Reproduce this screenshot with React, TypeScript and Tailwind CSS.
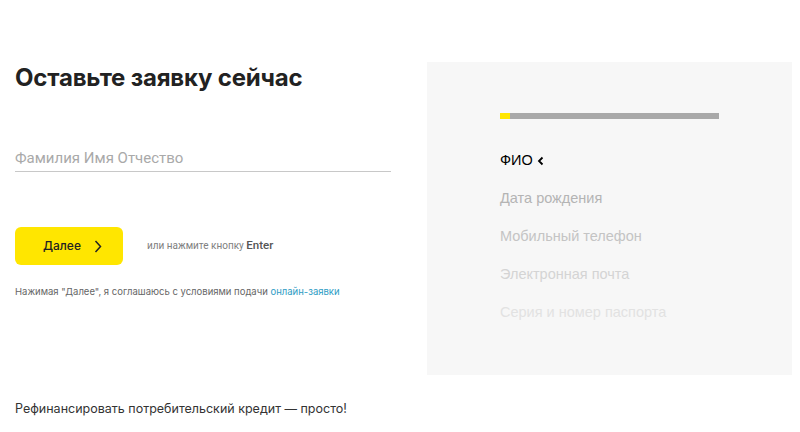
const steps = [
  { label: "Дата рождения", color: "text-[#b4b4b4]" },
  { label: "Мобильный телефон", color: "text-[#c4c4c4]" },
  { label: "Электронная почта", color: "text-[#d4d4d4]" },
  { label: "Серия и номер паспорта", color: "text-[#e2e2e2]" },
]

const App = () => {
  return (
    <main className="w-[800px] h-[432px] bg-white overflow-hidden font-['Inter',sans-serif]">
      <div className="flex pt-[62px] pl-[15px]">
        {/* ---- form column ---- */}
        <div className="w-[376px]">
          <h1 className="text-[24px] leading-[32px] font-bold text-[#222] tracking-[-0.2px]">Оставьте заявку сейчас</h1>

          <div className="mt-[48px] h-[30px] pt-[4px] border-b border-[#c8c8c8] flex items-center">
            <input
              className="w-full bg-transparent outline-none text-[15px] text-[#333] placeholder:text-[#a9a9a9] font-['Roboto',sans-serif]"
              placeholder="Фамилия Имя Отчество"
            />
          </div>

          <div className="mt-[55px] flex items-center">
            <button className="w-[108px] h-[38px] rounded-[6px] bg-[#ffe600] flex items-center pl-[28px] gap-[13px] text-[12px] font-medium text-[#222]">
              <span>Далее</span>
              <svg width="8" height="13" viewBox="0 0 8 13" fill="none">
                <path d="M1.5 1 L6.5 6.5 L1.5 12" stroke="#222" strokeWidth="1.5" />
              </svg>
            </button>
            <span className="ml-[24px] text-[10px] text-[#808080] font-['Roboto',sans-serif]">
              или нажмите кнопку <span className="text-[11.5px] text-[#555] font-medium">Enter</span>
            </span>
          </div>

          <p className="mt-[20px] text-[9.5px] text-[#666]">
            Нажимая "Далее", я соглашаюсь с условиями подачи{" "}
            <a className="text-[#2d9cc4]">онлайн-заявки</a>
          </p>

          <p className="mt-[101px] text-[12.5px] text-[#333]">Рефинансировать потребительский кредит — просто!</p>
        </div>

        {/* ---- steps panel ---- */}
        <aside className="ml-[36px] w-[365px] h-[313px] bg-[#f7f7f7] pl-[73px] pt-[51px] font-['Liberation_Sans',Arial,sans-serif]">
          <div className="w-[219px] h-[6px] bg-[#a9a9a9] flex">
            <div className="w-[10px] h-full bg-[#ffe600]" />
          </div>

          <div className="mt-[23px] flex flex-col">
            <div className="h-[38px] flex items-center text-[14.5px] text-black">
              ФИО
              <svg className="ml-[4px]" width="7" height="10" viewBox="0 0 7 10" fill="none">
                <path d="M5.5 1.5 L2 5 L5.5 8.5" stroke="#000" strokeWidth="1.8" />
              </svg>
            </div>
            {steps.map(step => (
              <div key={step.label} className={`h-[38px] flex items-center text-[14.5px] ${step.color}`}>
                {step.label}
              </div>
            ))}
          </div>
        </aside>
      </div>
    </main>
  )
}
export default App
